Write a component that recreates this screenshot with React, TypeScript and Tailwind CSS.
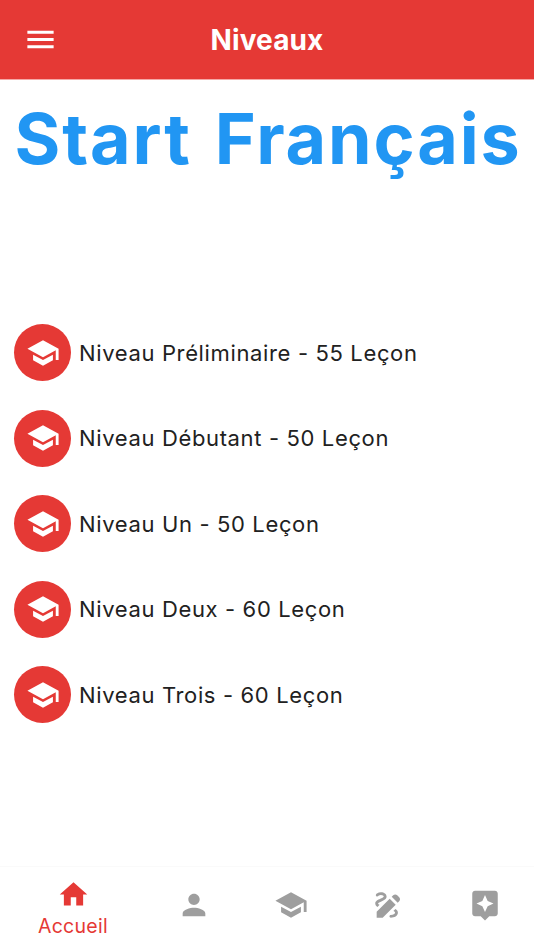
import React from 'react';
import { MdMenu, MdSchool, MdHome, MdPerson, MdDraw, MdAssistant } from 'react-icons/md';

const levels = [
  'Niveau Préliminaire - 55 Leçon',
  'Niveau Débutant - 50 Leçon',
  'Niveau Un - 50 Leçon',
  'Niveau Deux - 60 Leçon',
  'Niveau Trois - 60 Leçon',
];

export default function App() {
  return (
    <div className="flex h-[950px] w-[534px] flex-col overflow-hidden bg-white font-['Inter',sans-serif]">
      <header className="grid h-[80px] shrink-0 grid-cols-[80px_1fr_80px] items-center border-b border-[#f5a9a7] bg-[#e53935] text-white">
        <MdMenu className="ml-[22.5px] size-[35px]" />
        <h1 className="text-center text-[28px] font-bold leading-none tracking-[0.1px]">Niveaux</h1>
      </header>
      <main className="flex grow flex-col">
        <h2 className="mt-[19px] pl-[14.5px] text-[70px] font-bold leading-[80px] tracking-[1.85px] whitespace-nowrap text-[#2196f3] [word-spacing:4.5px]">Start Français</h2>
        <ul className="mt-[145.3px] flex flex-col gap-[28.5px] pl-[14px]">
          {levels.map((name) => (
            <li key={name} className="flex h-[57px] items-center gap-2">
              <span className="flex size-[57px] items-center justify-center rounded-full bg-[#e53935] pl-px text-white">
                <MdSchool className="size-[34px]" />
              </span>
              <span className="pt-px text-[22px] tracking-[0.64px] whitespace-nowrap text-[#212121]">{name}</span>
            </li>
          ))}
        </ul>
      </main>
      <nav className="grid h-[84px] shrink-0 grid-cols-[146px_96px_98px_96px_98px] items-center justify-items-center border-t border-[#fafafa] text-[#9e9e9e]">
        <div className="flex flex-col items-center text-[#e53935]">
          <MdHome className="size-[33px]" />
          <span className="pt-px text-[19.5px] leading-[28px] tracking-[0.3px]">Accueil</span>
        </div>
        <MdPerson className="mb-[8px] size-[34px]" />
        <MdSchool className="mb-[8px] size-[34px]" />
        <MdDraw className="mb-[8px] size-[34px]" />
        <MdAssistant className="mb-[8px] size-[34px]" />
      </nav>
    </div>
  );
}
